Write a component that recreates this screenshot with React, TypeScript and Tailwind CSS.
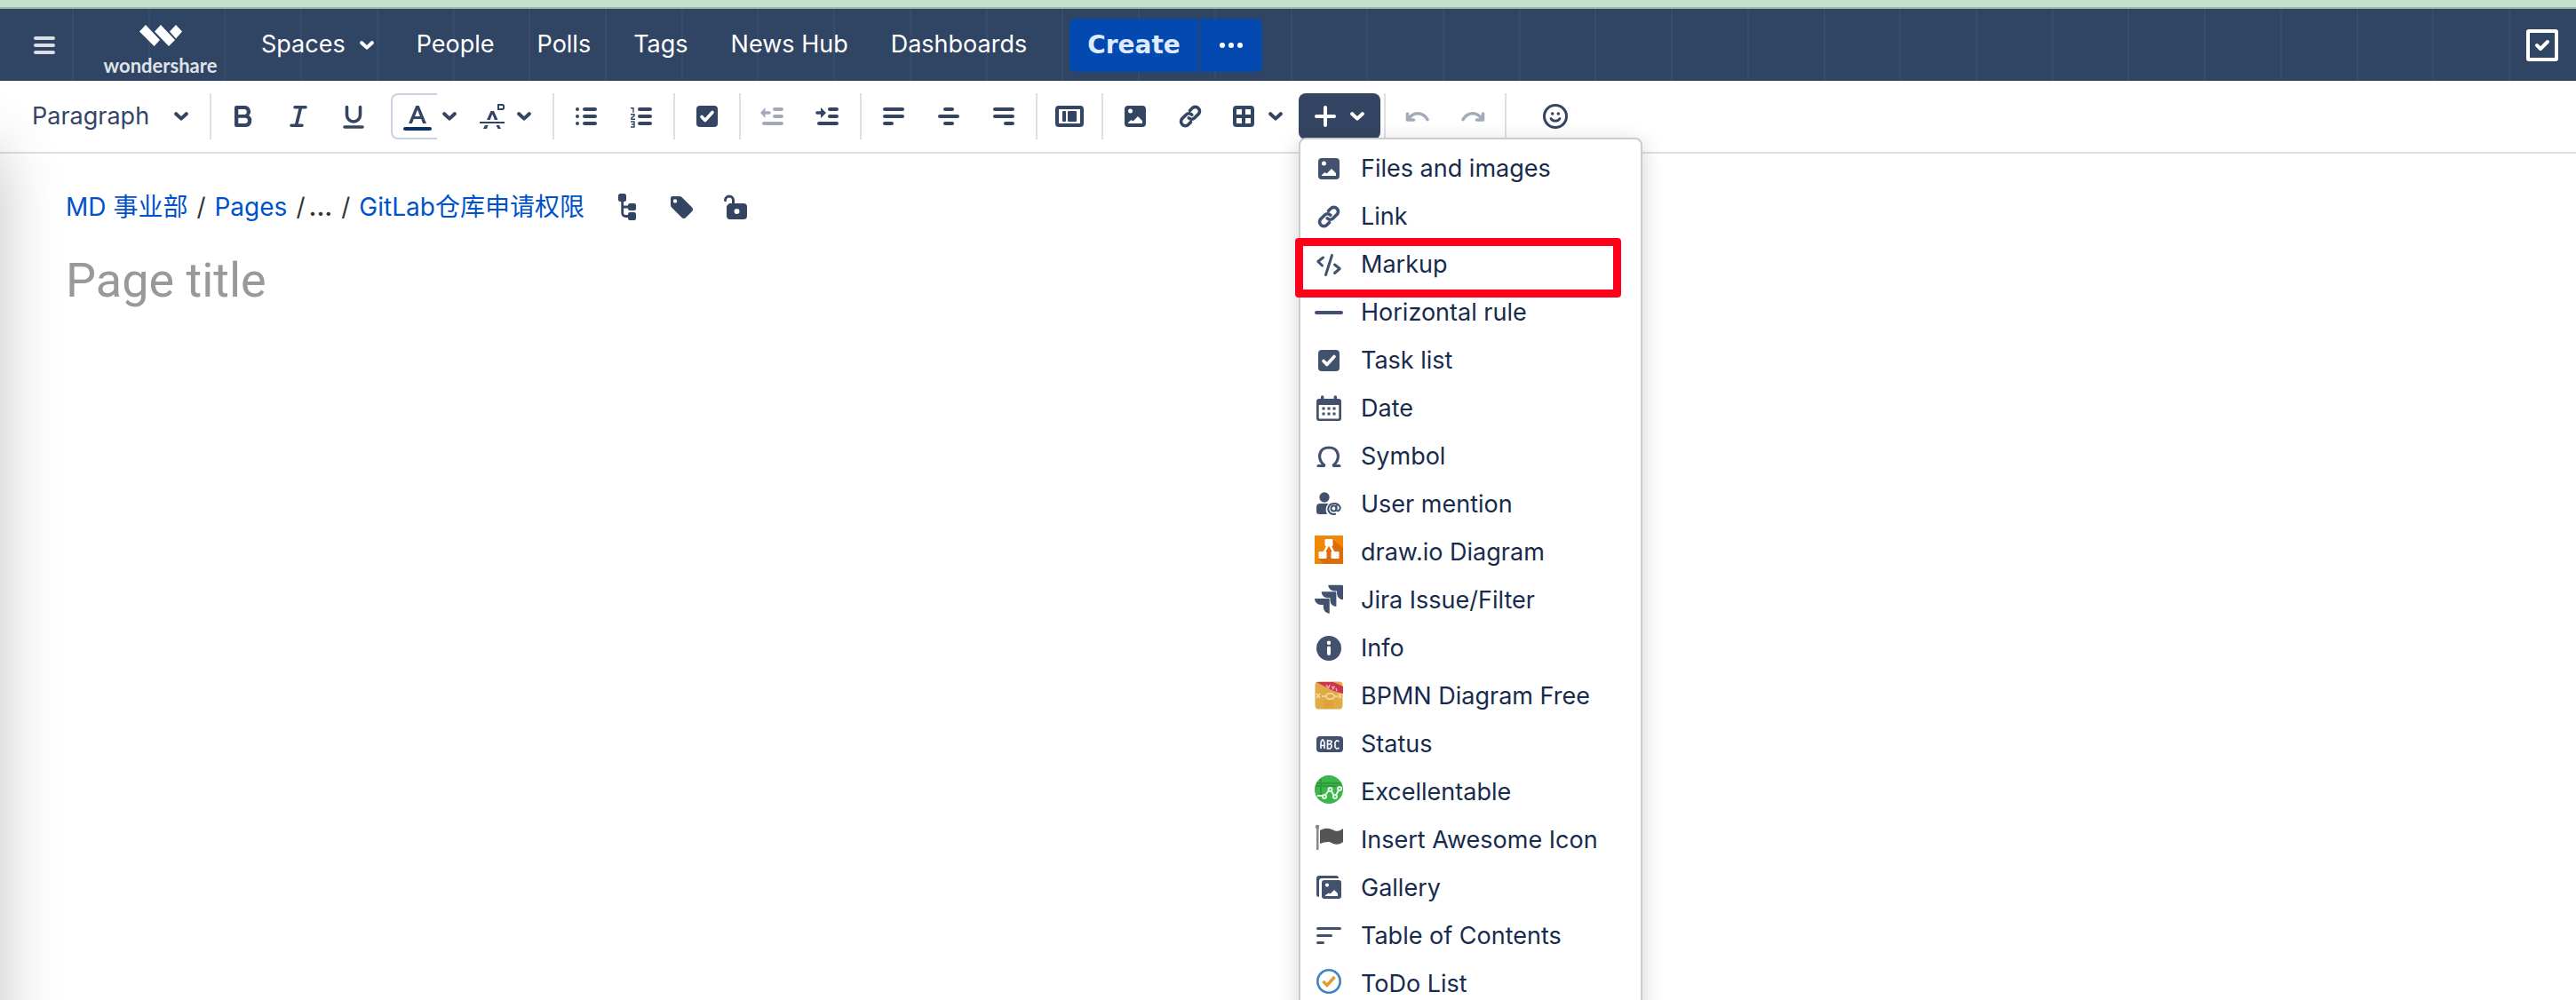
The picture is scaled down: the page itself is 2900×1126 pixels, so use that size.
import React from "react";

type SvgProps = { children: React.ReactNode; className?: string; viewBox?: string };

function Icon({ children, className = "h-8 w-8", viewBox = "0 0 32 32" }: SvgProps) {
  return (
    <svg viewBox={viewBox} className={`${className} shrink-0 overflow-visible`} fill="currentColor" aria-hidden="true">
      {children}
    </svg>
  );
}

function Chevron() {
  return (
    <svg viewBox="0 0 16 10" className="h-2.5 w-4 shrink-0" fill="none" stroke="currentColor" strokeWidth="4" strokeLinecap="round" strokeLinejoin="round" aria-hidden="true">
      <path d="M2.2 2.2 8 7.6l5.800-5.400" />
    </svg>
  );
}

const imageGlyph = (
  <Icon>
    <path fillRule="evenodd" d="M8 4h16a4 4 0 0 1 4 4v16a4 4 0 0 1-4 4H8a4 4 0 0 1-4-4V8a4 4 0 0 1 4-4Zm2.500 3.500a2.500 2.500 0 1 0 0 5 2.500 2.500 0 0 0 0-5ZM8 24h16v-3l-5-5-5.500 5.500-2-1.500L8 23Z" />
  </Icon>
);

const linkGlyph = (
  <Icon>
    <g fill="none" stroke="currentColor" strokeWidth="3.600" strokeLinecap="round">
      <path d="m15.500 9.500 2.700-2.700a4.700 4.700 0 0 1 6.800 0 4.700 4.700 0 0 1 0 6.800l-4.200 4.200a4.700 4.700 0 0 1-6.600 0" />
      <path d="m16.500 22.500-2.700 2.700a4.700 4.700 0 0 1-6.800 0 4.700 4.700 0 0 1 0-6.800l4.200-4.200a4.700 4.700 0 0 1 6.600 0" />
    </g>
  </Icon>
);

const checkGlyph = (
  <Icon>
    <rect x="4" y="4" width="24" height="24" rx="4" />
    <path d="m10 16.500 3.800 4 8.200-9" fill="none" stroke="#fff" strokeWidth="3.600" strokeLinecap="round" strokeLinejoin="round" />
  </Icon>
);

const icons = {
  bold: (
    <Icon>
      <path fillRule="evenodd" d="M8 4h9.500a6.500 6.500 0 0 1 4.600 11.100A7 7 0 0 1 18.500 28H8a2 2 0 0 1-2-2V6a2 2 0 0 1 2-2Zm2.300 4v6h6.500a3 3 0 0 0 0-6Zm0 9.700V24h7.500a3.100 3.100 0 0 0 0-6.300Z" />
    </Icon>
  ),
  italic: (
    <Icon>
      <path d="M12 5.800h12M8 26.200h12M18.500 6l-5 20" fill="none" stroke="currentColor" strokeWidth="3.600" strokeLinecap="round" />
    </Icon>
  ),
  underline: (
    <Icon>
      <path d="M8.500 5.500v9a7.500 7.500 0 0 0 15 0v-9M6 28h20" fill="none" stroke="currentColor" strokeWidth="3.600" strokeLinecap="round" />
    </Icon>
  ),
  textColor: (
    <Icon>
      <path fillRule="evenodd" d="M14.300 4h3.400l8.300 20h-3.900l-1.900-5h-8.400l-1.900 5H6Zm1.700 4.500L13.100 16h5.800Z" />
      <rect y="28" width="32" height="4" rx="2" fill="#0a3268" />
    </Icon>
  ),
  textStyle: (
    <Icon>
      <path d="M2 22h28v2H2ZM6 30l2-4h3.500l-1.500 4ZM20.500 26H24l2 4h-3.500ZM10 20l4.500-10h3.500l4.500 10h-3.600l-2.600-6.500L13.600 20Z" />
      <path d="M23 3h5l1 1v3l-1 1h-5Z" fill="none" stroke="currentColor" strokeWidth="2" />
    </Icon>
  ),
  bullets: (
    <Icon>
      <circle cx="6" cy="8" r="2" /><circle cx="6" cy="16" r="2" /><circle cx="6" cy="24" r="2" />
      <rect x="12" y="6" width="16" height="4" rx="2" /><rect x="12" y="14" width="16" height="4" rx="2" /><rect x="12" y="22" width="16" height="4" rx="2" />
    </Icon>
  ),
  numbers: (
    <Icon>
      <rect x="12" y="6" width="16" height="4" rx="2" /><rect x="12" y="14" width="16" height="4" rx="2" /><rect x="12" y="22" width="16" height="4" rx="2" />
      <path d="M4 6.700h3v5M4 13.700h4v2l-3 2v1.500h4M4 22h4v6H4M5 25h3" fill="none" stroke="currentColor" strokeWidth="1.400" />
    </Icon>
  ),
  outdent: (
    <Icon>
      <rect x="16" y="6" width="12" height="4" rx="2" /><rect x="16" y="14" width="12" height="4" rx="2" /><rect x="4" y="22" width="24" height="4" rx="2" />
      <path d="M2 12l5.500-6v4.200H12a1.800 1.800 0 0 1 0 3.600H7.500V18Z" />
    </Icon>
  ),
  indent: (
    <Icon>
      <rect x="16" y="6" width="12" height="4" rx="2" /><rect x="16" y="14" width="12" height="4" rx="2" /><rect x="4" y="22" width="24" height="4" rx="2" />
      <path d="M14 12 8 6v4.200H4a1.800 1.800 0 0 0 0 3.600h4V18Z" />
    </Icon>
  ),
  alignLeft: (
    <Icon>
      <rect x="4" y="6" width="24" height="4" rx="2" /><rect x="4" y="14" width="24" height="4" rx="2" /><rect x="4" y="22" width="12" height="4" rx="2" />
    </Icon>
  ),
  alignCenter: (
    <Icon>
      <rect x="10" y="6" width="12" height="4" rx="2" /><rect x="4" y="14" width="24" height="4" rx="2" /><rect x="10" y="22" width="12" height="4" rx="2" />
    </Icon>
  ),
  alignRight: (
    <Icon>
      <rect x="4" y="6" width="24" height="4" rx="2" /><rect x="4" y="14" width="24" height="4" rx="2" /><rect x="16" y="22" width="12" height="4" rx="2" />
    </Icon>
  ),
  layout: (
    <Icon>
      <path fillRule="evenodd" d="M4 4h24a4 4 0 0 1 4 4v16a4 4 0 0 1-4 4H4a4 4 0 0 1-4-4V8a4 4 0 0 1 4-4Zm0 4v16h24V8Z" />
      <rect x="8" y="10" width="4" height="12" rx="1" /><rect x="14" y="10" width="10" height="12" rx="1" />
    </Icon>
  ),
  table: (
    <Icon>
      <path fillRule="evenodd" d="M8 4h16a4 4 0 0 1 4 4v16a4 4 0 0 1-4 4H8a4 4 0 0 1-4-4V8a4 4 0 0 1 4-4Zm0 4v6h6V8Zm10 0v6h6V8ZM8 18v6h6v-6Zm10 0v6h6v-6Z" />
    </Icon>
  ),
  plus: (
    <Icon>
      <path d="M16 6v20M6 16h20" fill="none" stroke="currentColor" strokeWidth="4" strokeLinecap="round" />
    </Icon>
  ),
  undo: (
    <Icon>
      <path d="M4.500 13v7h7M5.500 19.500c5-9 16-9 21.500 0" fill="none" stroke="currentColor" strokeWidth="3.600" strokeLinecap="round" strokeLinejoin="round" />
    </Icon>
  ),
  redo: (
    <Icon>
      <path d="M27.500 13v7h-7M26.500 19.500c-5-9-16-9-21.500 0" fill="none" stroke="currentColor" strokeWidth="3.600" strokeLinecap="round" strokeLinejoin="round" />
    </Icon>
  ),
  emoji: (
    <Icon>
      <g fill="none" stroke="currentColor" strokeLinecap="round">
        <circle cx="16" cy="16" r="12.500" strokeWidth="3" />
        <path d="M11 18.500c2 3.600 8 3.600 10 0" strokeWidth="2.800" />
      </g>
      <circle cx="12.700" cy="13" r="1.800" /><circle cx="19.300" cy="13" r="1.800" />
    </Icon>
  ),
};

const menuItems: { label: string; icon: React.ReactNode; marked?: boolean }[] = [
  { label: "Files and images", icon: imageGlyph },
  { label: "Link", icon: linkGlyph },
  {
    label: "Markup",
    marked: true,
    icon: (
      <Icon>
        <path d="M9.500 8 3.800 12.500l4.700 4.500M19.500 5.500l-7 22M22.500 16l5.700 4.500-5.700 5" fill="none" stroke="currentColor" strokeWidth="3" strokeLinecap="round" strokeLinejoin="round" />
      </Icon>
    ),
  },
  { label: "Horizontal rule", icon: <Icon><rect y="14" width="32" height="4" rx="2" /></Icon> },
  { label: "Task list", icon: checkGlyph },
  {
    label: "Date",
    icon: (
      <Icon>
        <path fillRule="evenodd" d="M7 3a1.700 1.700 0 0 1 3.400 0v2h11.200V3A1.700 1.700 0 0 1 25 3v2h2a3 3 0 0 1 3 3v19a3 3 0 0 1-3 3H5a3 3 0 0 1-3-3V8a3 3 0 0 1 3-3h2ZM4.700 12v14.500a1 1 0 0 0 1 1h20.600a1 1 0 0 0 1-1V12Z" />
        <path d="M8.500 14.500h3v3h-3Zm6 0h3v3h-3Zm6 0h3v3h-3Zm-12 6h3v3h-3Zm6 0h3v3h-3Zm6 0h3v3h-3Z" />
      </Icon>
    ),
  },
  {
    label: "Symbol",
    icon: (
      <Icon>
        <path d="M4 26.500h7.500C2 19 4.500 6 16 6s14 13 4.500 20.500H28" fill="none" stroke="currentColor" strokeWidth="3.200" strokeLinecap="round" strokeLinejoin="bevel" />
      </Icon>
    ),
  },
  {
    label: "User mention",
    icon: (
      <Icon>
        <circle cx="11" cy="8" r="5.700" />
        <path d="M6 15h9.500a10 10 0 0 0-1.500 12H5a3 3 0 0 1-3-3v-5a4 4 0 0 1 4-4Z" />
        <g fill="none" stroke="currentColor" strokeWidth="2" strokeLinecap="round">
          <circle cx="21.500" cy="20.500" r="3" />
          <path d="M24.700 17.500l-.5 4.500c1 2.500 4.600 1 4.600-2.500a7 6.500 0 0 0-13.600 1c0 5 4 7.300 8 6.300" />
        </g>
      </Icon>
    ),
  },
  {
    label: "draw.io Diagram",
    icon: (
      <Icon viewBox="0 3 32 32">
        <path fill="#f08705" d="M0 0h32v32H0Z" />
        <path fill="#df6c0c" d="m20 4 12 10v18H10l-6-6 12-12Z" />
        <path d="m16 9-6 11M16 9l6 11" stroke="#fff" strokeWidth="2.500" />
        <rect x="11.500" y="4" width="9" height="8" rx="1" fill="#fff" /><rect x="4.500" y="18" width="9" height="8" rx="1" fill="#fff" /><rect x="18.500" y="18" width="9" height="8" rx="1" fill="#fff" />
      </Icon>
    ),
  },
  {
    label: "Jira Issue/Filter",
    icon: (
      <Icon viewBox="0 1 24 24">
        <path d="M11.571 11.513H0a5.218 5.218 0 0 0 5.232 5.215h2.130v2.057A5.215 5.215 0 0 0 12.575 24V12.518a1.005 1.005 0 0 0-1.005-1.005zm5.723-5.756H5.736a5.215 5.215 0 0 0 5.215 5.214h2.129v2.058a5.218 5.218 0 0 0 5.215 5.214V6.758a1.001 1.001 0 0 0-1.001-1.001zM23.013 0H11.455a5.215 5.215 0 0 0 5.215 5.215h2.129v2.057A5.215 5.215 0 0 0 24 12.483V1.005A1.001 1.001 0 0 0 23.013 0Z" />
      </Icon>
    ),
  },
  {
    label: "Info",
    icon: (
      <Icon>
        <circle cx="16" cy="16" r="14" />
        <circle cx="16" cy="9.800" r="2.200" fill="#fff" /><rect x="14" y="13.500" width="4" height="10.500" rx="2" fill="#fff" />
      </Icon>
    ),
  },
  {
    label: "BPMN Diagram Free",
    icon: (
      <Icon viewBox="0 1 32 32">
        <rect x=".5" y=".5" width="31" height="31" rx="4" fill="#e0aa44" />
        <path d="M2 1h19l11 5v8L20 10.500Z" fill="#cb3550" />
        <path d="m13 4 2 3.500M17 4l-1.500 4M19 6.500h3l-2 3M24 8l1 3" stroke="#eeb0b8" strokeWidth="1.500" fill="none" />
        <path d="M2 14l4 5M6 14l-4 5M8 17h4l3-3h5l3 3h3M12 17l3 3h5l3-3M27 14l3 5M30 14l-3 5" stroke="#f3dfae" strokeWidth="1.400" fill="none" />
        <path d="M10 21h11v10H10Z" fill="#dda23a" />
      </Icon>
    ),
  },
  {
    label: "Status",
    icon: (
      <Icon>
        <rect x="2" y="7" width="30" height="18" rx="4" />
        <path d="M7 21v-7l1.500-3h1l1.500 3v7M7 17.500h4M14.500 11v10h3l1.500-2v-2l-1.500-1.500 1.500-1.500v-1.500L17.500 12h-3m0 4h2.500M27.500 13 26 12h-1.500L23 14v5l1.500 2H26l1.500-1" fill="none" stroke="#fff" strokeWidth="1.600" />
      </Icon>
    ),
  },
  {
    label: "Excellentable",
    icon: (
      <Icon viewBox="0 3 32 32">
        <circle cx="16" cy="16" r="16" fill="#3cb54a" />
        <path d="M2 9h28M1 12h30M7 4v20" stroke="#2f9a3d" strokeWidth="2" />
        <g fill="none" stroke="#e6f6e8" strokeWidth="2">
          <path d="M3 23h6M12 22l4-5M19 18l3 5M24 22l3-5M30 14h1" />
          <circle cx="11" cy="24" r="2" /><circle cx="17.500" cy="16" r="2" /><circle cx="23" cy="24" r="2" /><circle cx="28" cy="15" r="2" />
        </g>
      </Icon>
    ),
  },
  {
    label: "Insert Awesome Icon",
    icon: (
      <Icon viewBox="0 2 32 32">
        <circle cx="3" cy="3" r="2.300" fill="#888" /><path d="M2 3h2.500v26H2Z" fill="#888" />
        <path d="M6 7c7-4 12-2 16 0s7 0 10-2v15c-5 4-10 3-13 1s-8-1-13 1Z" fill="#555" />
      </Icon>
    ),
  },
  {
    label: "Gallery",
    icon: (
      <Icon>
        <path d="M5 2h19a3 3 0 0 1 3 3H8a3 3 0 0 0-3 3v18a3 3 0 0 1-3-3V5a3 3 0 0 1 3-3Z" />
        <path fillRule="evenodd" d="M11 7h16a3 3 0 0 1 3 3v15a3 3 0 0 1-3 3H11a3 3 0 0 1-3-3V10a3 3 0 0 1 3-3Zm3 3.500a2 2 0 1 0 0 4.200 2 2 0 0 0 0-4.200ZM12 25h14v-3l-4-4-4.500 4.500-1.500-1L12 24Z" />
      </Icon>
    ),
  },
  {
    label: "Table of Contents",
    icon: (
      <Icon>
        <rect x="2" y="6" width="28" height="3" rx="1.500" /><rect x="2" y="14" width="18" height="3" rx="1.500" /><rect x="2" y="22" width="9" height="3" rx="1.500" />
      </Icon>
    ),
  },
  {
    label: "ToDo List",
    icon: (
      <Icon viewBox="0 3 32 32">
        <circle cx="16" cy="16" r="12.700" fill="none" stroke="#4083c4" strokeWidth="2.600" />
        <path d="m9.500 16 4.500 4.500 8.500-9.500" fill="none" stroke="#e69a2c" strokeWidth="3.600" />
      </Icon>
    ),
  },
];

function ToolButton({ label, children, disabled }: { label: string; children: React.ReactNode; disabled?: boolean }) {
  return (
    <button type="button" aria-label={label} disabled={disabled} className="flex h-[52px] w-[62px] items-center justify-center disabled:text-[#a3abba]">
      {children}
    </button>
  );
}

function Group({ children }: { children: React.ReactNode }) {
  return <div className="flex px-[5px]">{children}</div>;
}

function Separator() {
  return <div className="h-[52px] w-0.5 shrink-0 bg-[#dfe0e6]" />;
}

function Header() {
  return (
    <header className="relative z-10 border-t-2 border-[#9cb5a5] bg-[#304463] text-[27px] text-white">
      <div className="pointer-events-none absolute inset-0 flex justify-between pr-[74px] pl-[81px]" aria-hidden="true">
        {Array.from({ length: 33 }, (_, i) => (
          <span key={i} className="w-0.5 bg-[#374b6a]" />
        ))}
      </div>
      <div className="relative flex h-[81px] items-center pr-5">
        <button type="button" aria-label="Main menu" className="ml-[34px] text-[#dcdfe6]">
          <Icon><rect x="4" y="6" width="24" height="4" rx="2" /><rect x="4" y="14" width="24" height="4" rx="2" /><rect x="4" y="22" width="24" height="4" rx="2" /></Icon>
        </button>
        <a href="#home" className="ml-[49px] flex w-[131px] flex-col items-center font-[Lato,sans-serif] text-[22px] leading-7 font-bold text-[#dfe2e9]">
          <svg viewBox="0 0 48 24" className="mt-3.5 mb-2 h-6 w-12" fill="#fff" aria-hidden="true">
            <path d="M7 0 23 17l-6.500 7L0 7.500Z" />
            <path d="M24 0 40 17l-7 7-16-16.500Z" />
            <path d="m41 0 7 7.500-7 8-7-8Z" />
          </svg>
          wondershare
        </a>
        <nav className="ml-12 flex items-center gap-12">
          <button type="button" className="flex items-center gap-4">
            Spaces <Chevron />
          </button>
          <a href="#people">People</a>
          <a href="#polls">Polls</a>
          <a href="#tags">Tags</a>
          <a href="#news">News Hub</a>
          <a href="#dashboards">Dashboards</a>
        </nav>
        <div className="ml-12 flex h-[60px] gap-0.5">
          <button type="button" className="rounded-l-md bg-[#0449b0] px-5 font-['DejaVu_Sans',sans-serif] text-[28px] font-bold text-[#deebff]">
            Create
          </button>
          <button type="button" aria-label="Create from template" className="flex w-[70px] items-center justify-center rounded-r-md bg-[#0449b0]">
            <Icon><circle cx="6" cy="16" r="3" /><circle cx="16" cy="16" r="3" /><circle cx="26" cy="16" r="3" /></Icon>
          </button>
        </div>
        <button type="button" aria-label="Tasks" className="ml-auto">
          <Icon viewBox="0 0 36 36" className="h-9 w-9">
            <rect x="2" y="2" width="32" height="32" rx="1" fill="none" stroke="currentColor" strokeWidth="4" />
            <path d="m12 18 4 4 8-8" fill="none" stroke="currentColor" strokeWidth="4" strokeLinecap="round" strokeLinejoin="round" />
          </Icon>
        </button>
      </div>
    </header>
  );
}

function InsertMenu() {
  return (
    <ul className="absolute top-[50px] left-0 z-20 w-[387px] rounded-lg border-2 border-[#ccc] bg-white pt-1.5 pb-2 text-[#172b4d] shadow-[0_6px_24px_rgba(0,0,0,0.18)]">
      {menuItems.map((item) => (
        <li key={item.label} className="relative">
          <button type="button" className="flex h-[54px] w-full items-center gap-5 pl-4 text-left">
            <span className="text-[#42526e]">{item.icon}</span>
            {item.label}
          </button>
          {item.marked && (
            <span className="pointer-events-none absolute -top-[3px] -left-1.5 h-[67px] w-[367px] rounded border-[9px] border-[#ff0019]" />
          )}
        </li>
      ))}
    </ul>
  );
}

function Toolbar() {
  return (
    <div role="toolbar" aria-label="Formatting" className="flex h-[82px] items-center border-b-2 border-[#dfe0e6] bg-white text-[#344563]">
      <div className="relative flex w-[236px] shrink-0 items-center">
        <select aria-label="Text style" className="h-[52px] w-full appearance-none bg-transparent pl-9 text-[27px] outline-none">
          <option>Paragraph</option>
        </select>
        <span className="pointer-events-none absolute right-6">
          <Chevron />
        </span>
      </div>
      <Separator />
      <Group>
        <ToolButton label="Bold">{icons.bold}</ToolButton>
        <ToolButton label="Italic">{icons.italic}</ToolButton>
        <ToolButton label="Underline">{icons.underline}</ToolButton>
      </Group>
      <div className="flex items-center pr-6 pl-1.5">
        <button type="button" aria-label="Text colour" className="flex h-[52px] w-[52px] items-center rounded-l-lg border-2 border-r-0 border-[#c8d2e5] pl-3">
          {icons.textColor}
        </button>
        <button type="button" aria-label="More colours" className="ml-1.5 flex h-[52px] items-center">
          <Chevron />
        </button>
        <button type="button" aria-label="More formatting" className="ml-6 flex h-[52px] items-center gap-3">
          {icons.textStyle}
          <Chevron />
        </button>
      </div>
      <Separator />
      <Group>
        <ToolButton label="Bullet list">{icons.bullets}</ToolButton>
        <ToolButton label="Numbered list">{icons.numbers}</ToolButton>
      </Group>
      <Separator />
      <Group>
        <ToolButton label="Task list">{checkGlyph}</ToolButton>
      </Group>
      <Separator />
      <Group>
        <ToolButton label="Outdent" disabled>{icons.outdent}</ToolButton>
        <ToolButton label="Indent">{icons.indent}</ToolButton>
      </Group>
      <Separator />
      <Group>
        <ToolButton label="Align left">{icons.alignLeft}</ToolButton>
        <ToolButton label="Align center">{icons.alignCenter}</ToolButton>
        <ToolButton label="Align right">{icons.alignRight}</ToolButton>
      </Group>
      <Separator />
      <Group>
        <ToolButton label="Page layout">{icons.layout}</ToolButton>
      </Group>
      <Separator />
      <Group>
        <ToolButton label="Files and images">{imageGlyph}</ToolButton>
        <ToolButton label="Link">{linkGlyph}</ToolButton>
        <button type="button" aria-label="Table" className="flex h-[52px] items-center gap-3 px-[13px]">
          {icons.table}
          <Chevron />
        </button>
      </Group>
      <div className="relative mr-1 text-[27px]">
        <button type="button" aria-label="Insert more content" aria-expanded="true" className="flex h-[52px] w-[92px] items-center gap-3 rounded-lg bg-[#344563] pl-3.5 text-white">
          {icons.plus}
          <Chevron />
        </button>
        <InsertMenu />
      </div>
      <Separator />
      <Group>
        <ToolButton label="Undo" disabled>{icons.undo}</ToolButton>
        <ToolButton label="Redo" disabled>{icons.redo}</ToolButton>
      </Group>
      <Separator />
      <div className="flex px-6">
        <ToolButton label="Emoji">{icons.emoji}</ToolButton>
      </div>
    </div>
  );
}

function Editor() {
  return (
    <main className="px-[74px] pt-10">
      <div className="flex h-10 items-center text-[28px] text-[#333]">
        <nav aria-label="Breadcrumb" className="flex items-center whitespace-pre">
          <a href="#space" className="text-[#0052cc]">MD 事业部</a>
          <span className="px-2.5">/</span>
          <a href="#pages" className="text-[#0052cc]">Pages</a>
          <span className="pr-1 pl-2.5">/</span>
          <span className="font-semibold">...</span>
          <span className="px-2.5">/</span>
          <a href="#parent" className="text-[#0052cc]">GitLab仓库申请权限</a>
        </nav>
        <div className="ml-8 flex gap-[29px] text-[#344563]">
          <button type="button" aria-label="Page location">
            <Icon>
              <rect x="6" y="1" width="9" height="9" rx="2.500" /><rect x="17" y="12" width="9" height="8" rx="2" /><rect x="17" y="22" width="9" height="9" rx="2" />
              <path d="M10.700 8v15a3.500 3.500 0 0 0 3.500 3.500H18M10.700 16H18" fill="none" stroke="currentColor" strokeWidth="2.800" />
            </Icon>
          </button>
          <button type="button" aria-label="Labels">
            <Icon>
              <path fillRule="evenodd" d="M6 4h8a4 4 0 0 1 2.800 1.200l11 11a3.500 3.500 0 0 1 0 5l-6.500 6.500a3.500 3.500 0 0 1-5 0l-11-11A4 4 0 0 1 4 14V6a2 2 0 0 1 2-2Zm3 3.200a2.200 2.200 0 1 0 0 4.400 2.200 2.200 0 0 0 0-4.400Z" />
            </Icon>
          </button>
          <button type="button" aria-label="Restrictions">
            <Icon>
              <path fillRule="evenodd" d="M9 12h16a4 4 0 0 1 4 4v10a4 4 0 0 1-4 4H10a4 4 0 0 1-4-4V15Zm8.500 6a3 3 0 1 0 0 6 3 3 0 0 0 0-6Z" />
              <path d="M4.500 8.500a4.500 4.500 0 0 1 9 0V13" fill="none" stroke="currentColor" strokeWidth="3" strokeLinecap="round" />
            </Icon>
          </button>
        </div>
      </div>
      <input aria-label="Page title" placeholder="Page title" className="mt-6 block h-[76px] w-full bg-transparent font-[Roboto,'Noto_Sans_CJK_SC',sans-serif] text-[54px] outline-none placeholder:text-[#999]" />
    </main>
  );
}

export default function App() {
  return (
    <div className="relative h-screen overflow-hidden bg-white font-[Inter,'Noto_Sans_CJK_SC',sans-serif]">
      <div className="h-2 bg-[#c4e0cf]" />
      <Header />
      <div className="pointer-events-none absolute top-[170px] -bottom-24 -left-20 w-20 shadow-[0_0_70px_rgba(0,0,0,0.24)]" />
      <Toolbar />
      <Editor />
    </div>
  );
}
